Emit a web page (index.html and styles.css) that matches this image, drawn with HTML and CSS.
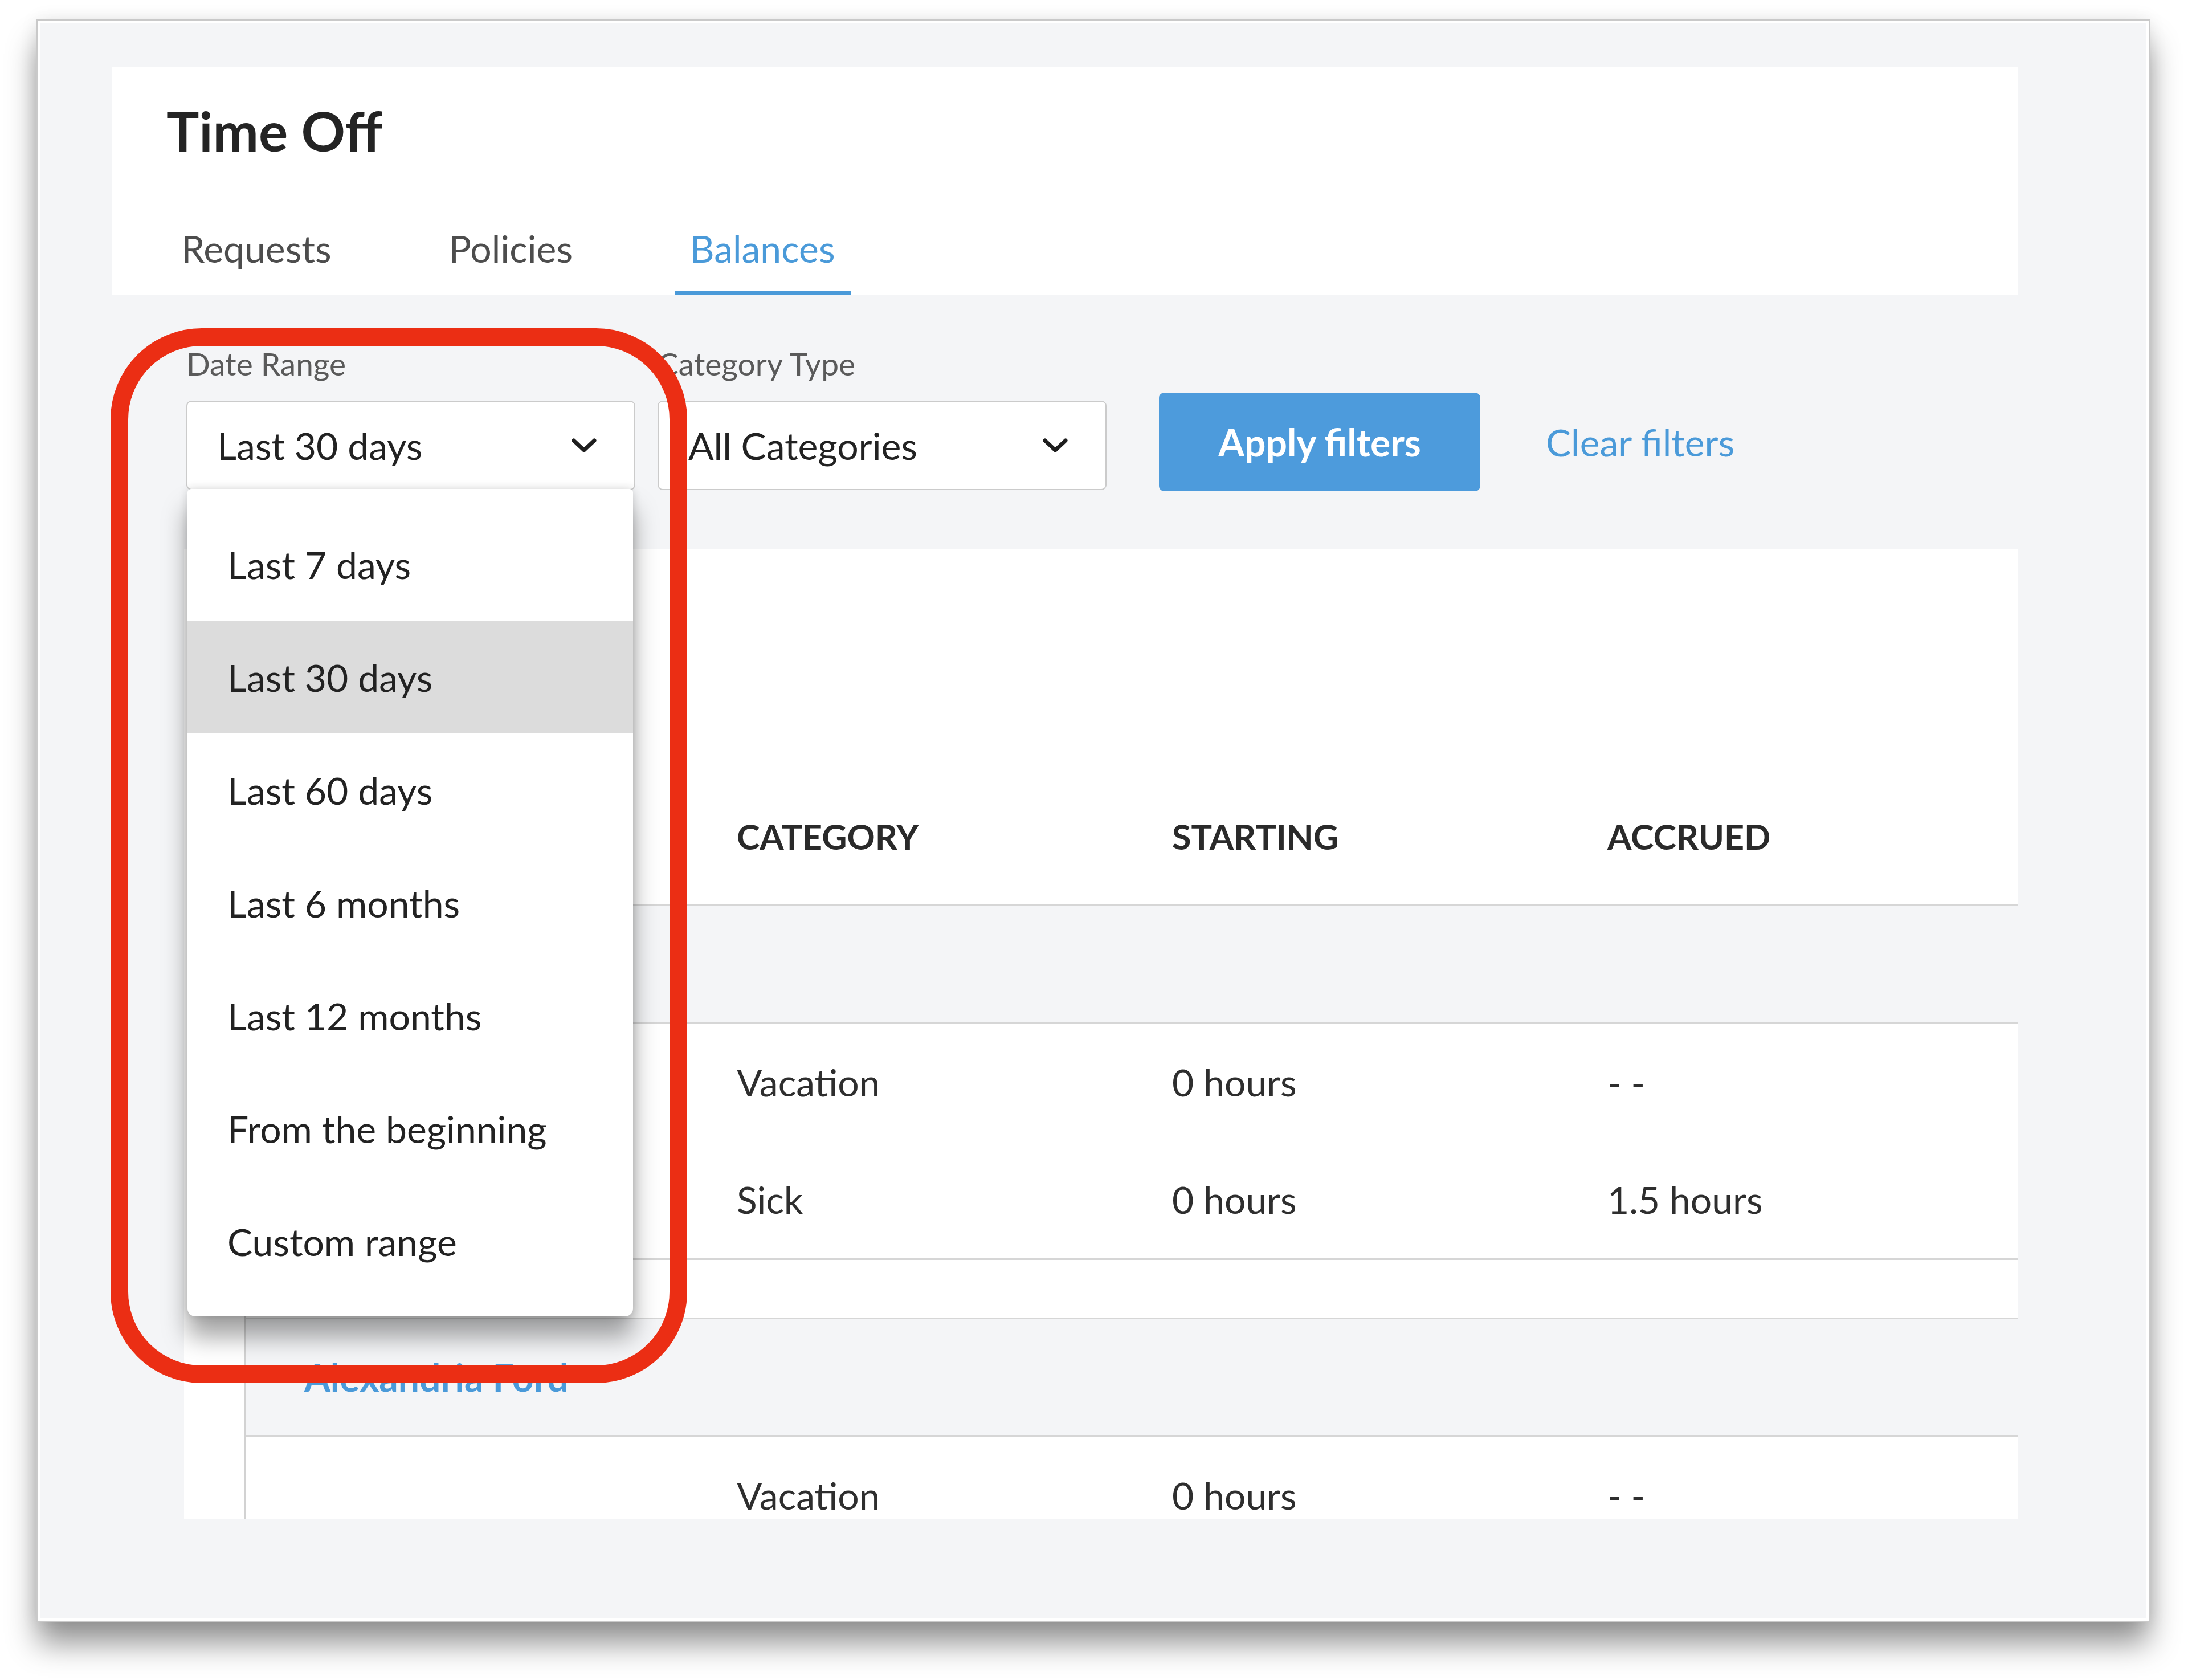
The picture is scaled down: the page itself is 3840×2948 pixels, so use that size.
FILE: index.html
```html
<!DOCTYPE html>
<html lang="en">
<head>
    <meta charset="UTF-8">
    <meta name="viewport" content="width=device-width, initial-scale=1.0">
    <title>Time Off - Balances</title>
    <link rel="stylesheet" href="styles.css">
</head>
<body>
    <div class="window">
        <header class="page-head">
            <h1>Time Off</h1>
            <nav class="tabs">
                <a class="tab">Requests</a>
                <a class="tab">Policies</a>
                <a class="tab active">Balances</a>
            </nav>
        </header>

        <main class="content">
            <div class="filters">
                <div class="field">
                    <label>Date Range</label>
                    <div class="select open">
                        <span>Last 30 days</span>
                        <svg class="chevron" viewBox="0 0 46 27"><polyline points="5,5 23,22 41,5"/></svg>
                        <ul class="menu">
                            <li>Last 7 days</li>
                            <li class="selected">Last 30 days</li>
                            <li>Last 60 days</li>
                            <li>Last 6 months</li>
                            <li>Last 12 months</li>
                            <li>From the beginning</li>
                            <li>Custom range</li>
                        </ul>
                    </div>
                </div>
                <div class="field">
                    <label>Category Type</label>
                    <div class="select">
                        <span>All Categories</span>
                        <svg class="chevron" viewBox="0 0 46 27"><polyline points="5,5 23,22 41,5"/></svg>
                    </div>
                </div>
                <button class="apply">Apply filters</button>
                <a class="clear">Clear filters</a>
            </div>

            <section class="panel">
                <div class="table">
                    <div class="row head">
                        <span>Employee</span>
                        <span>Category</span>
                        <span>Starting</span>
                        <span>Accrued</span>
                    </div>

                    <div class="group">
                        <div class="name-row"><a>Aaron Bailey</a></div>
                        <div class="row">
                            <span></span><span>Vacation</span><span>0 hours</span><span>- -</span>
                        </div>
                        <div class="row">
                            <span></span><span>Sick</span><span>0 hours</span><span>1.5 hours</span>
                        </div>
                    </div>

                    <div class="group">
                        <div class="name-row"><a>Alexandria Ford</a></div>
                        <div class="row">
                            <span></span><span>Vacation</span><span>0 hours</span><span>- -</span>
                        </div>
                    </div>
                </div>
            </section>
        </main>

        <div class="callout"></div>
    </div>
</body>
</html>
```

FILE: styles.css
```css
body {
    margin: 0;
    padding-bottom: 104px;
    background: #ffffff;
    font-family: Lato, "Open Sans", sans-serif;
    color: #262626;
}

.window {
    position: relative;
    box-sizing: border-box;
    width: 3705px;
    height: 2808px;
    margin: 36px 0 0 66px;
    padding: 78px 226px 0 126px;
    background: #f4f5f7;
    border: 4px solid #ffffff;
    box-shadow: 0 0 0 2px #c9c9c9, 0 40px 50px rgba(0, 0, 0, 0.42), 0 0 30px rgba(0, 0, 0, 0.1);
}

/* header card */
.page-head {
    background: #ffffff;
    padding: 51px 0 0 0;
}
.page-head h1 {
    margin: 0 0 109px 96px;
    font-size: 96px;
    line-height: 119px;
    font-weight: 700;
    color: #242424;
}
.tabs {
    display: flex;
    gap: 152px;
    padding-left: 95px;
}
.tab {
    padding: 0 27px 37px;
    font-size: 66px;
    line-height: 77px;
    color: #4d4d4d;
    border-bottom: 7px solid transparent;
}
.tab.active {
    color: #4a9ad9;
    border-bottom-color: #4a9ad9;
}

/* filters */
.content {
    padding: 89px 0 0 127px;
}
.filters {
    display: flex;
    align-items: flex-end;
    margin-left: 4px;
}
.field {
    display: flex;
    flex-direction: column;
    margin-right: 39px;
}
.field label {
    font-size: 55px;
    line-height: 62px;
    color: #5a5a5a;
    margin-bottom: 34px;
}
.select {
    position: relative;
    box-sizing: border-box;
    width: 788px;
    height: 157px;
    display: flex;
    align-items: center;
    justify-content: space-between;
    padding: 0 65px 0 52px;
    background: #ffffff;
    border: 2px solid #cbcbcb;
    border-radius: 9px;
    font-size: 66px;
    color: #222222;
}
.chevron {
    width: 46px;
    height: 27px;
    fill: none;
    stroke: #1e1e1e;
    stroke-width: 7;
    stroke-linecap: round;
    stroke-linejoin: round;
}

.menu {
    position: absolute;
    top: 100%;
    left: 0;
    right: 2px;
    z-index: 5;
    margin: 0;
    padding: 33px 0;
    list-style: none;
    background: #ffffff;
    border-radius: 6px 6px 14px 14px;
    box-shadow: 0 36px 44px rgba(0, 0, 0, 0.36), 0 0 16px rgba(0, 0, 0, 0.16);
}
.menu li {
    height: 198px;
    display: flex;
    align-items: center;
    padding-left: 70px;
    font-size: 66px;
    color: #222222;
}
.menu li.selected {
    background: #dcdcdc;
}

.apply {
    box-sizing: border-box;
    width: 564px;
    height: 173px;
    margin-left: 53px;
    margin-bottom: -2px;
    border: none;
    border-radius: 9px;
    background: #4d9bdc;
    color: #ffffff;
    font-family: inherit;
    font-size: 66px;
    font-weight: 700;
}
.clear {
    height: 173px;
    display: flex;
    align-items: center;
    margin-left: 115px;
    margin-bottom: -2px;
    font-size: 66px;
    color: #4a9ad9;
}

/* balances table */
.panel {
    margin-top: 104px;
    height: 1701px;
    overflow: hidden;
    background: #ffffff;
    padding-left: 106px;
}
.table {
    border-left: 2px solid #d2d2d2;
}
.row {
    display: grid;
    grid-template-columns: 862px 764px 764px 1fr;
    align-items: center;
    height: 206px;
    font-size: 66px;
    line-height: 1;
    color: #2e2e2e;
}
.row.head {
    height: auto;
    padding: 465px 0 81px;
    line-height: 77px;
    font-size: 61px;
    font-weight: 700;
    text-transform: uppercase;
    color: #2a2a2a;
    border-bottom: 3px solid #d6d6d6;
}
.group + .group {
    margin-top: 101px;
    border-top: 3px solid #d6d6d6;
}
.name-row {
    height: 203px;
    display: flex;
    align-items: center;
    padding-left: 103px;
    background: #f4f5f7;
    border-bottom: 3px solid #d6d6d6;
}
.name-row a {
    font-size: 66px;
    font-weight: 700;
    color: #4a9ad9;
}
.group .row:last-child {
    border-bottom: 3px solid #d6d6d6;
}

/* annotation ring around the date range dropdown */
.callout {
    position: absolute;
    left: 124px;
    top: 536px;
    box-sizing: border-box;
    width: 1012px;
    height: 1851px;
    border: 31px solid #eb2e14;
    border-radius: 160px;
    z-index: 10;
    pointer-events: none;
}
```
